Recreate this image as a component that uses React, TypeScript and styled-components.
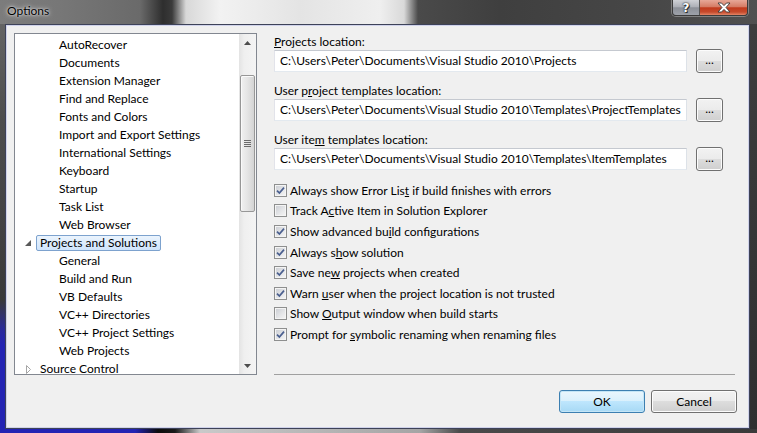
import React from "react";
import styled, { createGlobalStyle } from "styled-components";

const Global = createGlobalStyle`
  html, body { margin: 0; padding: 0; background: #3a3a3a; }
  body { width: 757px; height: 433px; overflow: hidden; font-family: Lato, "Noto Sans", sans-serif; }
  * { box-sizing: border-box; }
`;

const Window = styled.div`
  width: 757px;
  height: 433px;
  display: flex;
  flex-direction: column;
  background:
    linear-gradient(to right, #2323b3 0, #2323b3 135px, #0c0c0c 158px, #1a1a1a 175px, #c9c9c9 200px, #a5a5a5 420px, #4a4a4a 460px, #3a3a3a 100%) left bottom / 100% 4px no-repeat,
    linear-gradient(to bottom, #6a6a6a 0, #4d4d4d 120px, #3a3a3a 300px, #2a2a9a 330px, #2323b3 345px, #2323b3 100%) left top / 5px 100% no-repeat,
    linear-gradient(to bottom, #3e3e3e, #2f2f2f);
`;

const TitleBar = styled.div`
  height: 24px;
  flex: none;
  display: flex;
  align-items: flex-start;
  padding: 0 9px 0 7px;
  background: linear-gradient(to right, #7c7c7c 0, #777 60px, #6a6a6a 140px, #2e2e2e 163px, #3a3a3a 172px, #d8d8d8 186px, #f2f2f2 220px, #e4e4e4 300px, #efefef 380px, #d9d9d9 404px, #4a4a4a 418px, #3f3f3f 500px, #474747 650px, #505050 757px);
`;

const Title = styled.span`
  font-size: 12px;
  line-height: 22px;
  color: #000;
  text-shadow: 0 0 5px rgba(255, 255, 255, 0.9), 0 0 2px rgba(255, 255, 255, 0.8);
`;

const Caption = styled.div`
  margin-left: auto;
  display: flex;
  height: 16px;
  border: 1px solid #3b3b3b;
  border-top: none;
  border-radius: 0 0 4px 4px;
  overflow: hidden;
  box-shadow: 0 0 0 1px rgba(255, 255, 255, 0.3);
`;

const CapBtn = styled.div<{ $close?: boolean }>`
  width: ${(p) => (p.$close ? 47 : 27)}px;
  display: flex;
  align-items: center;
  justify-content: center;
  color: #fff;
  font: bold 12px "DejaVu Sans", sans-serif;
  text-shadow: 0 0 1px #222, 0 0 2px #222, 1px 1px 0 #333;
  border-right: ${(p) => (p.$close ? "none" : "1px solid #555")};
  background: ${(p) =>
    p.$close
      ? "linear-gradient(to bottom, #e7a897 0, #d57c65 45%, #c13a1c 52%, #c64a2c 80%, #e38566 100%)"
      : "linear-gradient(to bottom, #cfd1d6 0, #adb0b7 45%, #8c9098 52%, #9ea2aa 100%)"};
`;

const Body = styled.div`
  flex: 1;
  min-height: 0;
  display: flex;
  padding: 0 7px 4px 5px;
`;

const Client = styled.div`
  flex: 1;
  display: grid;
  grid-template-columns: 243px 1fr;
  grid-template-rows: 1fr auto;
  column-gap: 17px;
  padding: 8px 12px 15px 8px;
  background: #f0f0f0;
  border: 1px solid #3d4258;
  box-shadow: inset 0 0 0 1px #cfd2ea;
  font-size: 12px;
  color: #000;
`;

const Tree = styled.div`
  display: flex;
  border: 1px solid #828790;
  background: #fff;
  overflow: hidden;
`;

const TreeList = styled.ul`
  flex: 1;
  margin: 0;
  padding: 2px 0 0 0;
  list-style: none;
  overflow: hidden;
`;

const TreeRow = styled.li<{ $level: number }>`
  height: 18px;
  flex: none;
  display: flex;
  align-items: center;
  padding-left: ${(p) => (p.$level === 0 ? 5 : 24)}px;
  white-space: nowrap;
`;

const Expander = styled.span`
  width: 16px;
  height: 16px;
  flex: none;
  display: flex;
  align-items: center;
  justify-content: center;
`;

const TreeLabel = styled.span<{ $selected?: boolean }>`
  height: 16px;
  line-height: 14px;
  padding: 0 3px;
  border: 1px solid ${(p) => (p.$selected ? "#7da2ce" : "transparent")};
  border-radius: 2px;
  background: ${(p) => (p.$selected ? "linear-gradient(to bottom, #ebf4fd, #cfe4fc)" : "transparent")};
`;

const ScrollBar = styled.div`
  width: 17px;
  flex: none;
  display: flex;
  flex-direction: column;
  background: linear-gradient(to right, #e3e3e3, #efefef 30%, #f4f4f4);
`;

const Arrow = styled.div`
  height: 17px;
  flex: none;
  display: flex;
  align-items: center;
  justify-content: center;
`;

const Gap = styled.div<{ $h?: number }>`
  flex: ${(p) => (p.$h ? "none" : "1")};
  height: ${(p) => (p.$h ? `${p.$h}px` : "auto")};
`;

const Thumb = styled.div`
  height: 137px;
  flex: none;
  margin: 0 1px;
  border: 1px solid #979797;
  border-radius: 2px;
  background: linear-gradient(to right, #f1f1f1, #e6e6e6 45%, #d4d4d4);
  box-shadow: inset 1px 1px 0 #fafafa;
  display: flex;
  align-items: center;
  justify-content: center;
`;

const Right = styled.div`
  display: flex;
  flex-direction: column;
`;

const Group = styled.div`
  display: flex;
  flex-direction: column;
  & + & {
    margin-top: 9px;
  }
`;

const Label = styled.div`
  padding-top: 1px;
  line-height: 15px;
`;

const Key = styled.span`
  text-decoration: underline;
`;

const FieldRow = styled.div`
  height: 24px;
  display: flex;
  align-items: center;
  gap: 9px;
  padding-right: 14px;
`;

const Input = styled.div`
  flex: 1;
  height: 22px;
  border: 1px solid;
  border-color: #c5c9d0 #dde2e8 #e3e9ef #e2e3ea;
  background: #fff;
  padding-left: 5px;
  line-height: 20px;
  white-space: nowrap;
  overflow: hidden;
`;

const BrowseBtn = styled.div`
  width: 27px;
  height: 24px;
  flex: none;
  border: 1px solid #707070;
  border-radius: 3px;
  background: linear-gradient(to bottom, #f2f2f2 0, #ebebeb 50%, #dddddd 50%, #cfcfcf 100%);
  box-shadow: inset 0 0 0 1px #fcfcfc;
  display: flex;
  align-items: center;
  justify-content: center;
  line-height: 1;
  padding-bottom: 2px;
`;

const Checks = styled.div`
  margin-top: 9px;
  display: flex;
  flex-direction: column;
`;

const CheckRow = styled.div`
  height: 20.6px;
  display: flex;
  align-items: center;
  gap: 3px;
  white-space: nowrap;
`;

const Box = styled.span`
  width: 13px;
  height: 13px;
  flex: none;
  border: 1px solid #8e8f8f;
  background: linear-gradient(135deg, #c9ccd2 0, #e6e7e9 60%, #f6f6f6 100%);
  box-shadow: inset 0 0 0 1px #f4f4f4;
  display: flex;
  align-items: center;
  justify-content: center;
`;

const Separator = styled.div`
  margin-top: auto;
  margin-right: 2px;
  height: 1px;
  background: #a0a0a0;
`;

const Buttons = styled.div`
  grid-column: 1 / span 2;
  margin-top: 15px;
  display: flex;
  justify-content: flex-end;
  gap: 6px;
`;

const DlgButton = styled.div<{ $default?: boolean }>`
  width: 86px;
  height: 23px;
  border: 1px solid ${(p) => (p.$default ? "#3c7fb1" : "#707070")};
  border-radius: 3px;
  background: ${(p) =>
    p.$default
      ? "linear-gradient(to bottom, #eaf6fd 0, #d9f0fc 50%, #bee6fd 50%, #a7d9f5 100%)"
      : "linear-gradient(to bottom, #f2f2f2 0, #ebebeb 50%, #dddddd 50%, #cfcfcf 100%)"};
  box-shadow: inset 0 0 0 1px ${(p) => (p.$default ? "#c4e5f6" : "#fcfcfc")};
  display: flex;
  align-items: center;
  justify-content: center;
  line-height: 1;
`;

const treeItems: { text: string; level: number; expander?: "open" | "closed"; selected?: boolean }[] = [
  { text: "AutoRecover", level: 1 },
  { text: "Documents", level: 1 },
  { text: "Extension Manager", level: 1 },
  { text: "Find and Replace", level: 1 },
  { text: "Fonts and Colors", level: 1 },
  { text: "Import and Export Settings", level: 1 },
  { text: "International Settings", level: 1 },
  { text: "Keyboard", level: 1 },
  { text: "Startup", level: 1 },
  { text: "Task List", level: 1 },
  { text: "Web Browser", level: 1 },
  { text: "Projects and Solutions", level: 0, expander: "open", selected: true },
  { text: "General", level: 1 },
  { text: "Build and Run", level: 1 },
  { text: "VB Defaults", level: 1 },
  { text: "VC++ Directories", level: 1 },
  { text: "VC++ Project Settings", level: 1 },
  { text: "Web Projects", level: 1 },
  { text: "Source Control", level: 0, expander: "closed" },
];

const Check = () => (
  <svg width="9" height="9" viewBox="0 0 9 9">
    <path d="M1 4.6 L3.4 7 L8 1.6" fill="none" stroke="#4a5f8f" strokeWidth="1.7" />
  </svg>
);

const checks: { pre: string; key: string; post: string; checked: boolean }[] = [
  { pre: "Always show Error Lis", key: "t", post: " if build finishes with errors", checked: true },
  { pre: "Track A", key: "c", post: "tive Item in Solution Explorer", checked: false },
  { pre: "Show advanced bu", key: "i", post: "ld configurations", checked: true },
  { pre: "Always s", key: "h", post: "ow solution", checked: true },
  { pre: "Save ne", key: "w", post: " projects when created", checked: true },
  { pre: "Warn ", key: "u", post: "ser when the project location is not trusted", checked: true },
  { pre: "Show ", key: "O", post: "utput window when build starts", checked: false },
  { pre: "Prompt for ", key: "s", post: "ymbolic renaming when renaming files", checked: true },
];

const fields = [
  { pre: "", key: "P", post: "rojects location:", value: "C:\\Users\\Peter\\Documents\\Visual Studio 2010\\Projects" },
  { pre: "User p", key: "r", post: "oject templates location:", value: "C:\\Users\\Peter\\Documents\\Visual Studio 2010\\Templates\\ProjectTemplates" },
  { pre: "User ite", key: "m", post: " templates location:", value: "C:\\Users\\Peter\\Documents\\Visual Studio 2010\\Templates\\ItemTemplates" },
];

export default function App() {
  return (
    <>
      <Global />
      <Window>
        <TitleBar>
          <Title>Options</Title>
          <Caption>
            <CapBtn>?</CapBtn>
            <CapBtn $close>
              <svg width="14" height="11" viewBox="0 0 14 11">
                <path
                  d="M1 1 H4.5 L7 3.6 L9.5 1 H13 L9 5.5 L13 10 H9.5 L7 7.4 L4.5 10 H1 L5 5.5 Z"
                  fill="#fff"
                  stroke="#3a3a3a"
                  strokeWidth="0.9"
                  strokeLinejoin="round"
                />
              </svg>
            </CapBtn>
          </Caption>
        </TitleBar>
        <Body>
          <Client>
            <Tree>
              <TreeList>
                {treeItems.map((it) => (
                  <TreeRow key={it.text} $level={it.level}>
                    <Expander>
                      {it.expander === "open" && (
                        <svg width="6" height="6" viewBox="0 0 6 6">
                          <path d="M6 0 V6 H0 Z" fill="#595959" />
                        </svg>
                      )}
                      {it.expander === "closed" && (
                        <svg width="5" height="9" viewBox="0 0 5 9">
                          <path d="M0.5 0.5 L4.5 4.5 L0.5 8.5 Z" fill="#fff" stroke="#a6a6a6" strokeWidth="1" />
                        </svg>
                      )}
                    </Expander>
                    <TreeLabel $selected={it.selected}>{it.text}</TreeLabel>
                  </TreeRow>
                ))}
              </TreeList>
              <ScrollBar>
                <Arrow>
                  <svg width="7" height="4" viewBox="0 0 7 4">
                    <path d="M0 4 L3.5 0 L7 4 Z" fill="#4d4d4d" />
                  </svg>
                </Arrow>
                <Gap $h={24} />
                <Thumb>
                  <svg width="7" height="8" viewBox="0 0 7 8">
                    <path d="M0 0.5 H7 M0 2.5 H7 M0 4.5 H7 M0 6.5 H7" stroke="#6b6b6b" strokeWidth="1" />
                  </svg>
                </Thumb>
                <Gap />
                <Arrow>
                  <svg width="7" height="4" viewBox="0 0 7 4">
                    <path d="M0 0 L3.5 4 L7 0 Z" fill="#4d4d4d" />
                  </svg>
                </Arrow>
              </ScrollBar>
            </Tree>
            <Right>
              {fields.map((f) => (
                <Group key={f.value}>
                  <Label>
                    {f.pre}
                    <Key>{f.key}</Key>
                    {f.post}
                  </Label>
                  <FieldRow>
                    <Input>{f.value}</Input>
                    <BrowseBtn>...</BrowseBtn>
                  </FieldRow>
                </Group>
              ))}
              <Checks>
                {checks.map((c) => (
                  <CheckRow key={c.pre}>
                    <Box>{c.checked && <Check />}</Box>
                    <span>
                      {c.pre}
                      <Key>{c.key}</Key>
                      {c.post}
                    </span>
                  </CheckRow>
                ))}
              </Checks>
              <Separator />
            </Right>
            <Buttons>
              <DlgButton $default>OK</DlgButton>
              <DlgButton>Cancel</DlgButton>
            </Buttons>
          </Client>
        </Body>
      </Window>
    </>
  );
}
